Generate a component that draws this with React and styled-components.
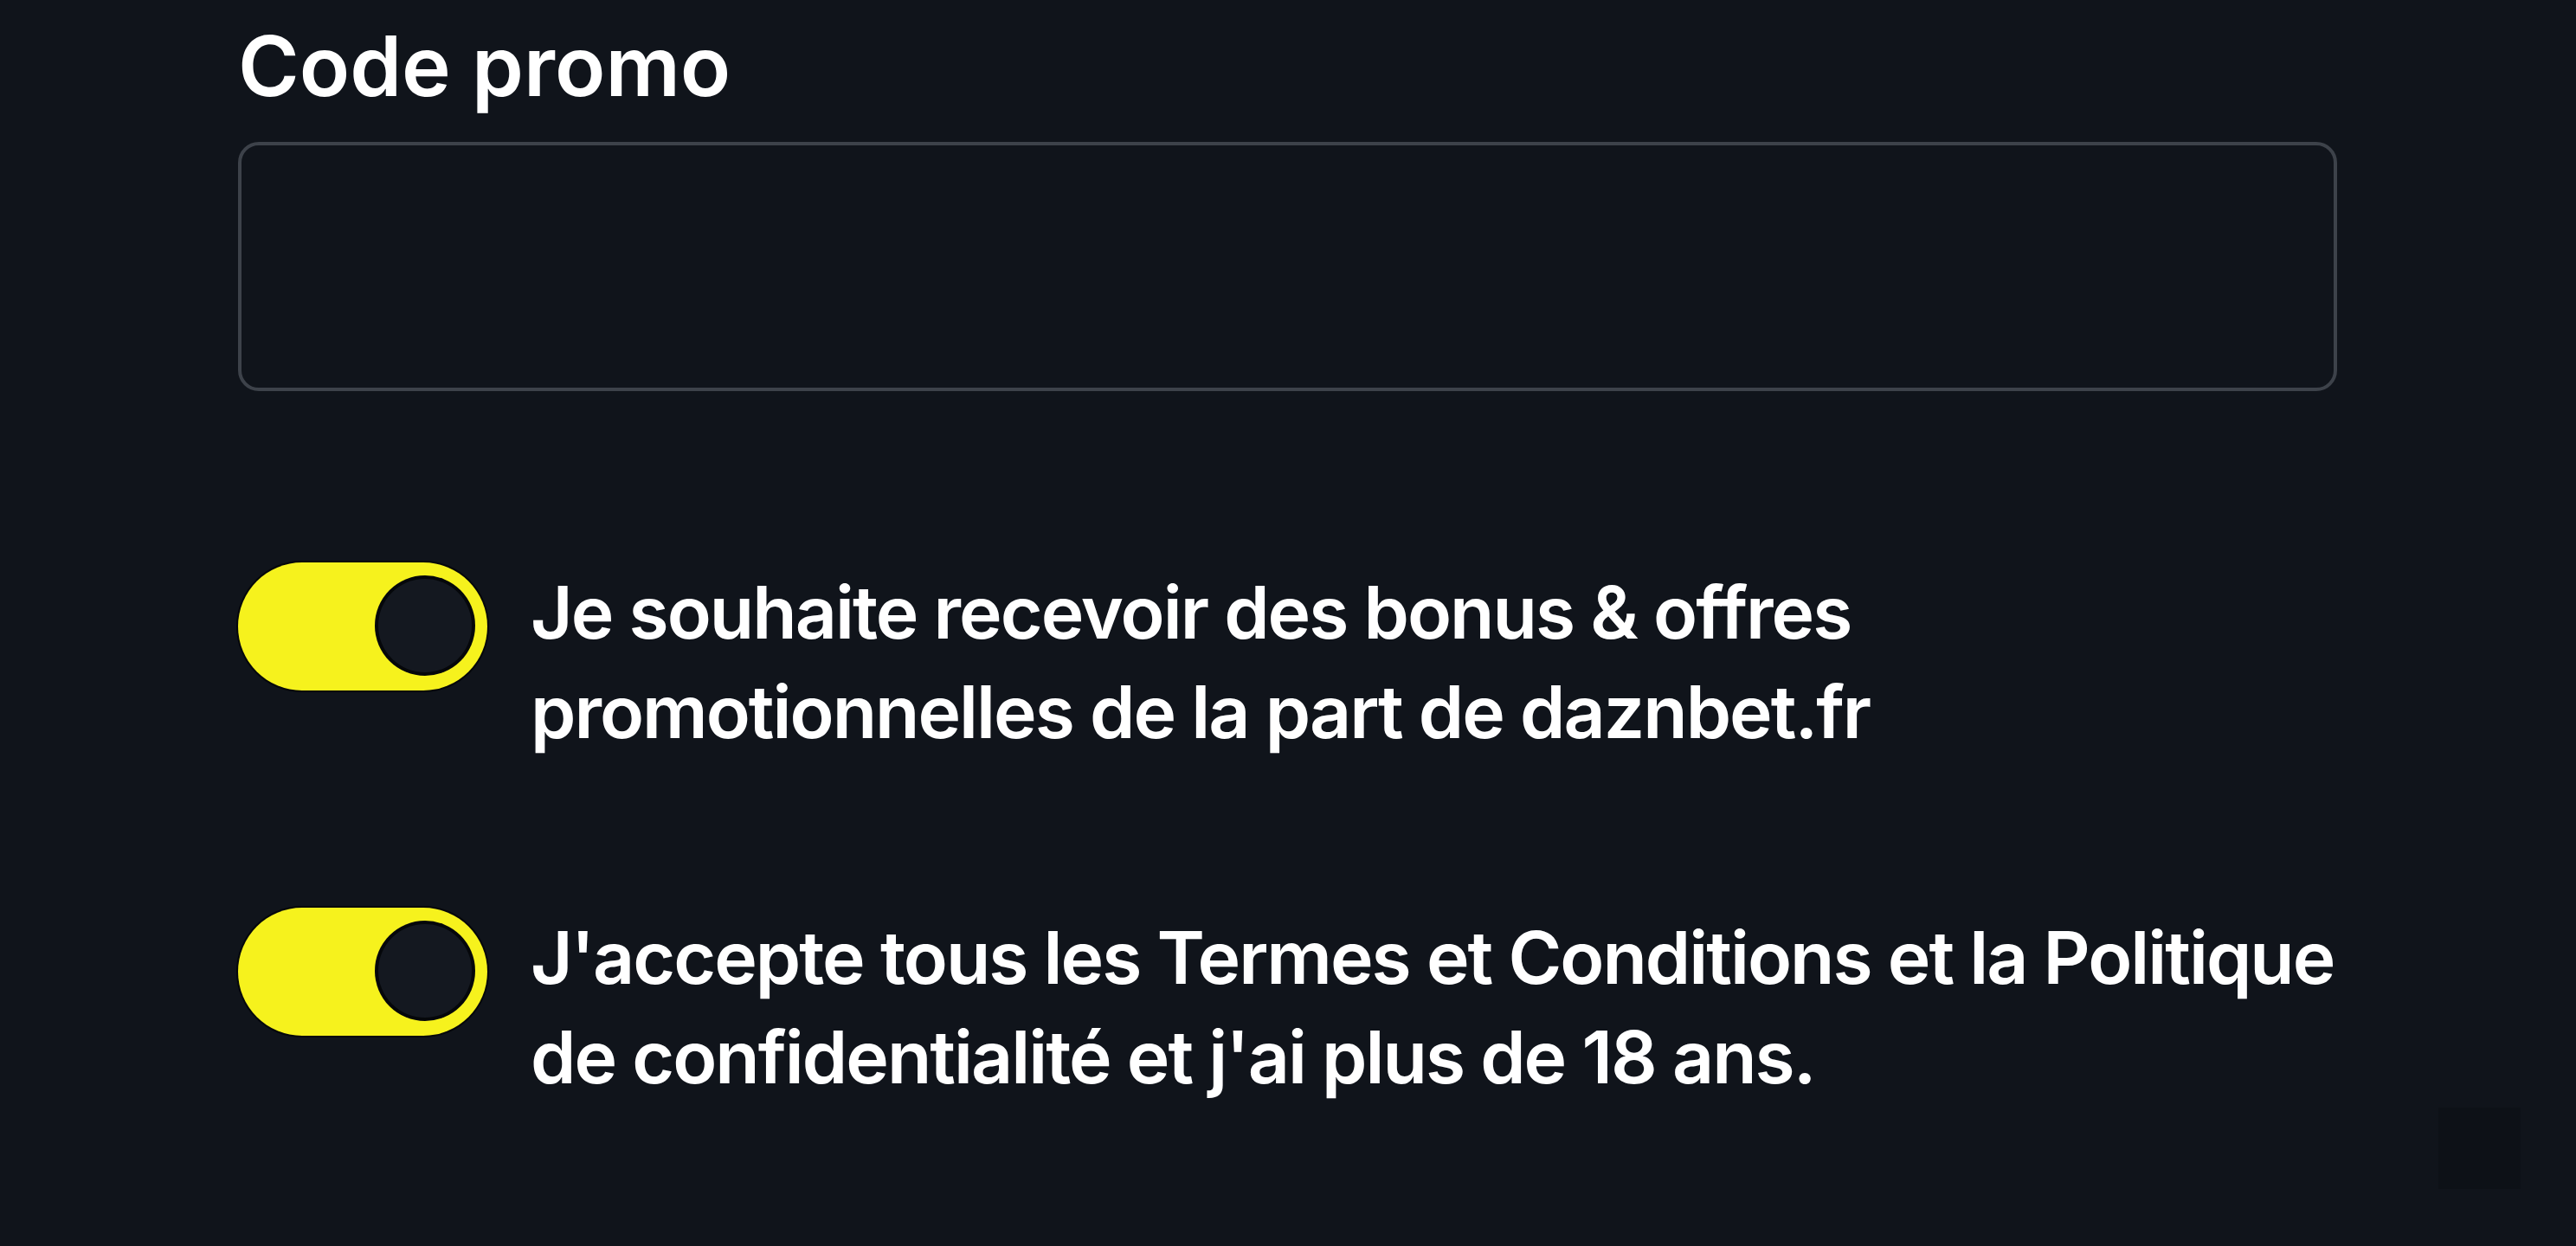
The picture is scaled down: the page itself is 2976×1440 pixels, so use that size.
import React, { useState } from "react";
import styled, { createGlobalStyle } from "styled-components";

const GlobalStyle = createGlobalStyle`
  html, body {
    margin: 0;
    padding: 0;
    background: #10141b;
  }
  body {
    font-family: Inter, "Noto Sans", "Liberation Sans", sans-serif;
    color: #ffffff;
  }
`;

const Page = styled.div`
  min-height: 1440px;
  box-sizing: border-box;
  padding: 14px 276px 0 275px;
  display: flex;
  flex-direction: column;
`;

const Label = styled.label`
  font-size: 96px;
  font-weight: 600;
  line-height: 124px;
  color: #ffffff;
`;

const PromoInput = styled.input`
  box-sizing: border-box;
  margin-top: 26px;
  width: 100%;
  height: 288px;
  background: transparent;
  border: 4px solid #3d424a;
  border-radius: 24px;
  outline: none;
  color: #fff;
  font: inherit;
  font-size: 80px;
  padding: 0 40px;
`;

const Options = styled.div`
  display: flex;
  flex-direction: column;
  gap: 169px;
  margin-top: 198px;
`;

const OptionRow = styled.div`
  display: flex;
  align-items: flex-start;
  gap: 50px;
`;

const Track = styled.button`
  flex: none;
  position: relative;
  width: 288px;
  height: 148px;
  border: none;
  padding: 0;
  border-radius: 74px;
  background: ${(p) => (p.$on ? "#f6f21d" : "#3a3f47")};
  box-shadow: 0 0 0 2px #05070a;
  cursor: pointer;
`;

const Knob = styled.span`
  position: absolute;
  top: 19px;
  left: ${(p) => (p.$on ? "162px" : "18px")};
  width: 108px;
  height: 108px;
  border-radius: 50%;
  background: #141820;
  box-shadow: 0 0 0 4px #05070a;
`;

const OptionText = styled.p`
  margin: 0;
  font-size: 84px;
  font-weight: 600;
  line-height: 115px;
  letter-spacing: -2px;
  white-space: nowrap;
  color: #ffffff;
`;

const Corner = styled.div`
  position: fixed;
  right: 64px;
  bottom: 66px;
  width: 95px;
  height: 94px;
  background: #0d1117;
`;

const Toggle = ({ on, onChange }) => (
  <Track $on={on} onClick={onChange} aria-pressed={on}>
    <Knob $on={on} />
  </Track>
);

const options = [
  {
    id: "bonus",
    lines: [
      "Je souhaite recevoir des bonus & offres",
      "promotionnelles de la part de daznbet.fr",
    ],
  },
  {
    id: "terms",
    lines: [
      "J'accepte tous les Termes et Conditions et la Politique",
      "de confidentialité et j'ai plus de 18 ans.",
    ],
  },
];

export default function App() {
  const [checked, setChecked] = useState({ bonus: true, terms: true });
  const flip = (id) => setChecked((prev) => ({ ...prev, [id]: !prev[id] }));

  return (
    <>
      <GlobalStyle />
      <Page>
        <Label htmlFor="promo">Code promo</Label>
        <PromoInput id="promo" type="text" />
        <Options>
          {options.map((opt) => (
            <OptionRow key={opt.id}>
              <Toggle on={checked[opt.id]} onChange={() => flip(opt.id)} />
              <OptionText>
                {opt.lines[0]}
                <br />
                {opt.lines[1]}
              </OptionText>
            </OptionRow>
          ))}
        </Options>
      </Page>
      <Corner />
    </>
  );
}
